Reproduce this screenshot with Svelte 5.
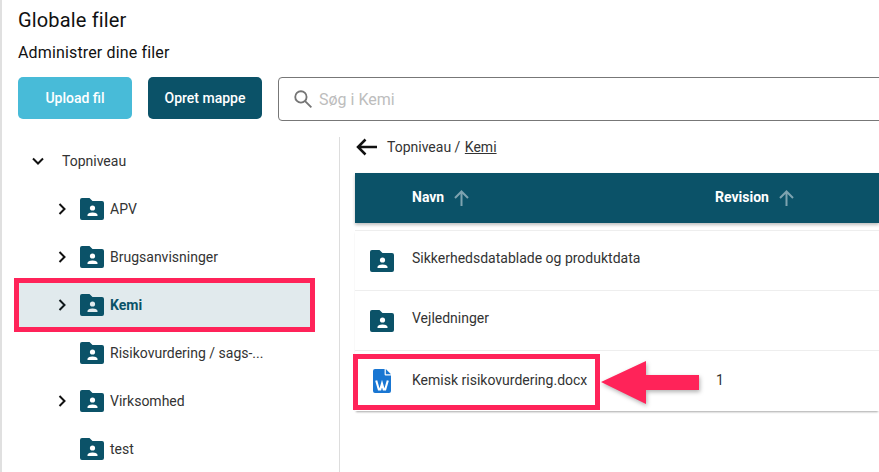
<script>
  const folderPath = "M2 0h7.5l3 3H22a2 2 0 0 1 2 2v15a2 2 0 0 1-2 2H2a2 2 0 0 1-2-2V2a2 2 0 0 1 2-2z";

  const tree = [
    { name: "APV", arrow: true },
    { name: "Brugsanvisninger", arrow: true },
    { name: "Kemi", arrow: true, selected: true },
    { name: "Risikovurdering / sags-...", arrow: false },
    { name: "Virksomhed", arrow: true },
    { name: "test", arrow: false },
  ];

  const folders = ["Sikkerhedsdatablade og produktdata", "Vejledninger"];
</script>

{#snippet folder()}
  <svg class="folder" viewBox="0 0 24 22" aria-hidden="true">
    <path d={folderPath} fill="#0b5268" />
    <circle cx="12.5" cy="10" r="2.6" fill="#fff" />
    <path d="M7.5 18v-1c0-1.8 3.3-2.5 5-2.5s5 .7 5 2.5v1z" fill="#fff" />
  </svg>
{/snippet}

<div class="page">
  <h1>Globale filer</h1>
  <h2>Administrer dine filer</h2>

  <div class="toolbar">
    <button class="btn light">Upload fil</button>
    <button class="btn dark">Opret mappe</button>
    <div class="search">
      <svg class="search-icon" viewBox="0 0 24 24" aria-hidden="true">
        <circle cx="9.5" cy="9.5" r="6.8" />
        <path d="M14.5 14.5 22 22" />
      </svg>
      <span>Søg i Kemi</span>
    </div>
  </div>

  <div class="content">
    <aside class="tree">
      <div class="root">
        <svg class="chev" viewBox="0 0 14 14" aria-hidden="true"><path d="M2 4.5l5 5 5-5" /></svg>
        <span>Topniveau</span>
      </div>
      {#each tree as item}
        <div class="node" class:selected={item.selected}>
          <span class="arrow-slot">
            {#if item.arrow}
              <svg class="chev" viewBox="0 0 14 14" aria-hidden="true"><path d="M4.5 2l5 5-5 5" /></svg>
            {/if}
          </span>
          {@render folder()}
          <span class="node-name">{item.name}</span>
        </div>
      {/each}
      <div class="mark mark-tree"></div>
    </aside>

    <main class="files">
      <div class="crumbs">
        <svg class="back" viewBox="0 0 21 18" aria-hidden="true"><path d="M21 9H2M9.5 1.5 2 9l7.5 7.500" /></svg>
        <span>Topniveau / <u>Kemi</u></span>
      </div>

      <div class="thead">
        <div class="col-name th">
          <span class="th-label">Navn</span>
          <svg class="sort" viewBox="0 0 15 16" aria-hidden="true"><path d="M7.5 16V1.5M1 8l6.5-6.5L14 8" /></svg>
        </div>
        <div class="th">
          <span class="th-label">Revision</span>
          <svg class="sort" viewBox="0 0 15 16" aria-hidden="true"><path d="M7.5 16V1.5M1 8l6.5-6.5L14 8" /></svg>
        </div>
      </div>

      <div class="rows">
        {#each folders as name}
          <div class="row">
            <span class="row-icon">{@render folder()}</span>
            <span class="col-text lifted">{name}</span>
          </div>
        {/each}
        <div class="row file">
          <span class="row-icon">
            <svg class="word" viewBox="0 0 18 24" aria-hidden="true">
              <path d="M2 0h9.6v5.4a1 1 0 0 0 1 1H18V22a2 2 0 0 1-2 2H2a2 2 0 0 1-2-2V2a2 2 0 0 1 2-2z" fill="#1976d2" />
              <path d="M12.8 0 18 5.2h-5.2z" fill="#1976d2" />
              <path d="M3.2 11.5 5.8 20.5h1.5L9 14.5l1.7 6h1.5l2.6-9" fill="none" stroke="#fff" stroke-width="2.1" />
            </svg>
          </span>
          <span class="col-text nudged">Kemisk risikovurdering.docx</span>
          <span class="nudged">1</span>
        </div>
        <div class="mark mark-file"></div>
        <svg class="pointer" viewBox="0 0 98 43" aria-hidden="true">
          <path d="M0 21 45 0v14h53v15H45v14z" fill="#ff2359" />
        </svg>
      </div>
    </main>
  </div>
</div>

<style>
  :global(body) {
    margin: 0;
    background: #fff;
    overflow: hidden;
  }

  .page {
    width: 879px;
    height: 472px;
    box-sizing: border-box;
    border-left: 2px solid #e0e0e0;
    padding-left: 16px;
    font-family: Roboto, "Liberation Sans", sans-serif;
    color: #333;
    overflow: hidden;
  }

  h1 {
    margin: 0;
    padding-top: 8px;
    font-size: 20px;
    line-height: 24px;
    font-weight: 400;
    letter-spacing: 0.15px;
    color: #111;
  }

  h2 {
    margin: 0;
    padding-top: 12px;
    font-size: 16px;
    line-height: 18px;
    font-weight: 400;
    letter-spacing: 0.15px;
    color: #111;
  }

  .toolbar {
    display: flex;
    gap: 16px;
    margin-top: 15px;
  }

  .btn {
    width: 114px;
    height: 42px;
    border: none;
    border-radius: 5px;
    color: #fff;
    font-family: inherit;
    font-size: 14px;
    font-weight: 500;
    padding: 0;
  }

  .light {
    background: #48bbd8;
  }

  .dark {
    background: #0b5268;
  }

  .search {
    flex: 1;
    height: 44px;
    box-sizing: border-box;
    margin-right: -10px;
    display: flex;
    align-items: center;
    gap: 6px;
    padding-left: 14px;
    border: 1px solid #777;
    border-radius: 4px;
    color: #bdbdbd;
    font-size: 16px;
  }

  .search-icon {
    width: 20px;
    height: 20px;
    fill: none;
    stroke: #757575;
    stroke-width: 2.2;
  }

  .content {
    display: flex;
    margin-top: 16px;
  }

  .tree {
    position: relative;
    width: 322px;
    box-sizing: border-box;
    border-right: 1px solid #ddd;
    height: 340px;
    flex: none;
  }

  .root {
    display: flex;
    align-items: center;
    height: 48px;
    padding-left: 13px;
    gap: 17px;
    font-size: 14px;
  }

  .node {
    display: flex;
    align-items: center;
    height: 48px;
    padding-left: 37px;
    font-size: 14px;
  }

  .node.selected {
    font-weight: 700;
    color: #0b5268;
  }

  .arrow-slot {
    width: 25px;
    display: flex;
    flex: none;
  }

  .chev {
    width: 14px;
    height: 14px;
    fill: none;
    stroke: #111;
    stroke-width: 2;
  }

  .folder {
    width: 24px;
    height: 22px;
    flex: none;
    display: block;
  }

  .node-name {
    margin-left: 6px;
  }

  .mark {
    position: absolute;
    box-sizing: border-box;
    border: 5px solid #ff2359;
    pointer-events: none;
  }

  .mark-tree {
    left: -4px;
    top: 141px;
    width: 301px;
    height: 54px;
    background: rgba(11, 82, 104, 0.12);
  }

  .files {
    flex: 1;
    min-width: 0;
    padding-left: 15px;
  }

  .crumbs {
    display: flex;
    align-items: center;
    height: 22px;
    gap: 10px;
    font-size: 14px;
    padding-left: 1px;
    margin-bottom: 15px;
    margin-top: -1px;
  }

  u {
    margin-left: 1px;
  }

  .back {
    width: 21px;
    height: 18px;
    fill: none;
    stroke: #111;
    stroke-width: 2.5;
  }

  .thead {
    display: flex;
    align-items: center;
    height: 50px;
    background: #0b5268;
    box-shadow: 0 2px 3px rgba(0, 0, 0, 0.25);
    padding-left: 57px;
    color: #fff;
  }

  .th {
    display: flex;
    align-items: center;
    gap: 10px;
    font-size: 14px;
    font-weight: 700;
  }

  .th-label {
    margin-bottom: 2px;
  }

  .col-name {
    width: 303px;
  }

  .sort {
    width: 15px;
    height: 16px;
    margin-bottom: 1px;
    fill: none;
    stroke: #7ea3b0;
    stroke-width: 2;
  }

  .rows {
    position: relative;
    margin-top: 7px;
    border-top: 1px solid #eee;
    box-shadow: 0 2px 2px -1px rgba(0, 0, 0, 0.35);
  }

  .row {
    display: flex;
    align-items: center;
    height: 60px;
    box-sizing: border-box;
    border-bottom: 1px solid #eee;
    font-size: 14px;
  }

  .row.file {
    border-bottom: none;
  }

  .row-icon {
    width: 57px;
    flex: none;
    display: flex;
    padding-left: 15px;
    box-sizing: border-box;
  }

  .col-text {
    width: 304px;
    flex: none;
  }

  .lifted {
    margin-bottom: 6px;
  }

  .nudged {
    margin-bottom: 2px;
  }

  .word {
    width: 18px;
    height: 24px;
    display: block;
    margin-left: 3px;
  }

  .mark-file {
    left: -2px;
    top: 123px;
    width: 247px;
    height: 56px;
  }

  .pointer {
    position: absolute;
    left: 246px;
    top: 130px;
    width: 98px;
    height: 43px;
    filter: drop-shadow(1px 2px 2px rgba(0, 0, 0, 0.3));
  }
</style>
